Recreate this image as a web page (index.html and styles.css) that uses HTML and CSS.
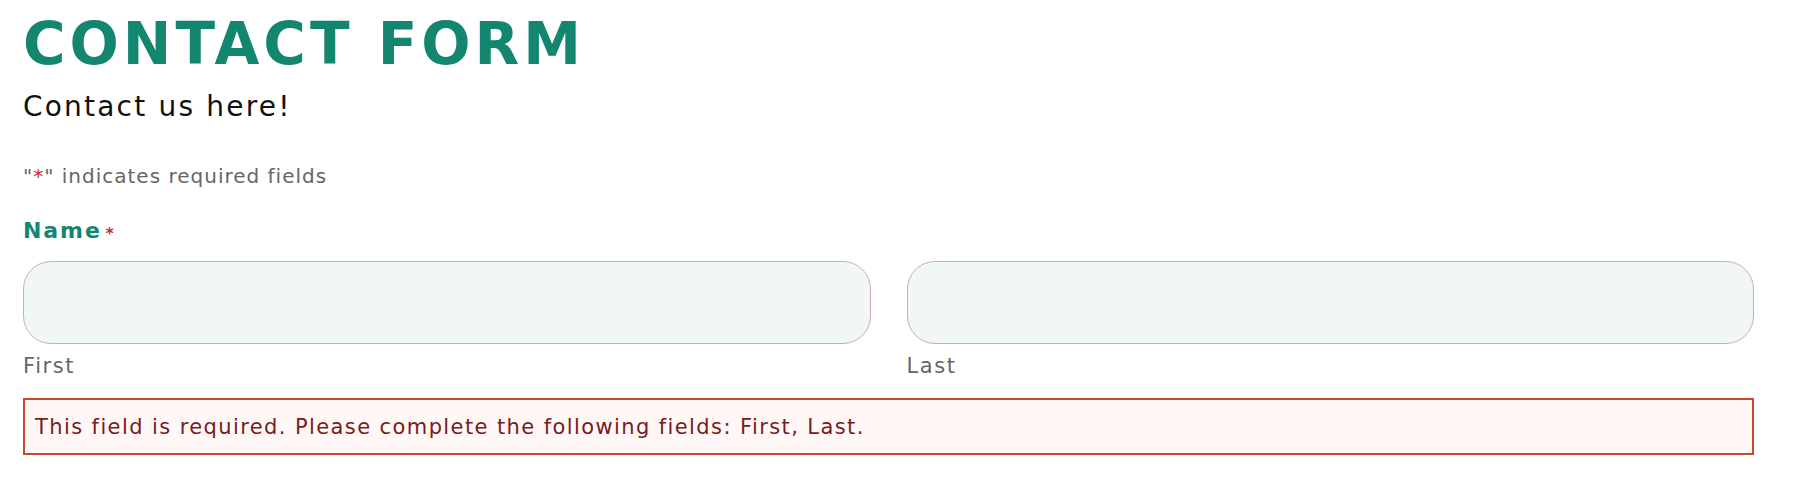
FILE: index.html
```html
<!DOCTYPE html>
<html lang="en">
<head>
<meta charset="utf-8">
<title>Contact Form</title>
<link rel="stylesheet" href="styles.css">
</head>
<body>
<main class="page">
  <h1 class="title">CONTACT FORM</h1>
  <p class="intro">Contact us here!</p>
  <p class="legend">"<span class="req">*</span>" indicates required fields</p>
  <div class="field">
    <div class="label">Name<span class="req label-req">*</span></div>
    <div class="name-row">
      <div class="name-col">
        <div class="input"></div>
        <div class="sublabel">First</div>
      </div>
      <div class="name-col">
        <div class="input"></div>
        <div class="sublabel">Last</div>
      </div>
    </div>
    <div class="error">This field is required. Please complete the following fields: First, Last.</div>
  </div>
</main>
</body>
</html>
```
FILE: styles.css
```css
* { box-sizing: border-box; }
html, body { margin: 0; padding: 0; background: #ffffff; }
body { font-family: "DejaVu Sans", "Open Sans", sans-serif; }
.page { width: 1731px; margin-left: 23px; padding-top: 14px; }
.title {
  margin: 0;
  font-family: "DejaVu Sans", sans-serif;
  font-weight: 800;
  font-size: 58px;
  line-height: 60px;
  letter-spacing: 4px;
  color: #138670;
}
.intro {
  margin: 17px 0 0 0;
  font-size: 28px;
  line-height: 32px;
  letter-spacing: 2.2px;
  color: #111111;
}
.legend {
  margin: 41px 0 0 0;
  font-size: 20px;
  line-height: 24px;
  letter-spacing: 1px;
  color: #666666;
}
.req { color: #c02b2b; }
.field { margin-top: 30px; }
.label {
  font-size: 22px;
  line-height: 26px;
  font-weight: 700;
  letter-spacing: 1.9px;
  color: #148670;
  display: flex;
  align-items: flex-start;
}
.label-req { font-size: 15px; margin-left: 4px; margin-top: 3px; letter-spacing: 0; }
.name-row { display: flex; gap: 36px; margin-top: 14px; }
.name-col { flex: 1; }
.input {
  height: 83px;
  background: #f1f6f6;
  border: 1.5px solid #d3aab0;
  border-radius: 28px;
}
.sublabel {
  margin-top: 10px;
  font-size: 21px;
  line-height: 24px;
  letter-spacing: 1.6px;
  color: #666666;
}
.error {
  margin-top: 20px;
  height: 57px;
  display: flex;
  align-items: center;
  padding-left: 10px;
  border: 2px solid #c8492f;
  background: #fff8f7;
  font-size: 21px;
  letter-spacing: 1.4px;
  color: #7a1b1b;
}
```
